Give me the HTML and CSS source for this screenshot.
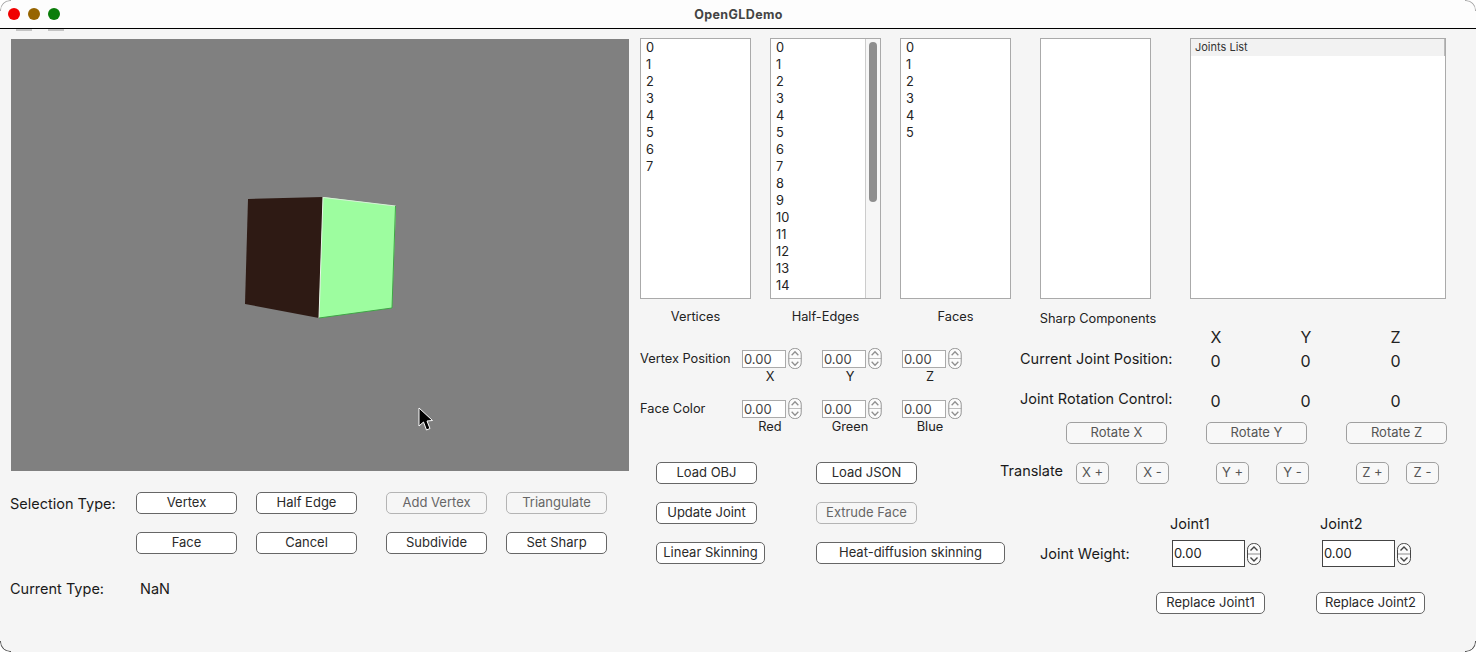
FILE: index.html
```html
<!DOCTYPE html>
<html lang="en">
<head>
<meta charset="utf-8">
<title>OpenGLDemo</title>
<link rel="stylesheet" href="styles.css">
</head>
<body>
<svg class="defs" width="0" height="0" aria-hidden="true">
  <symbol id="spin" viewBox="0 0 14 22">
    <rect x="0.5" y="0.5" width="13" height="21" rx="6" fill="#fbfbfb" stroke="currentColor"/>
    <path d="M0.5 11H13.5" stroke="currentColor" stroke-width="0.6" fill="none"/>
    <path d="M3.500 7.500L7 4L10.500 7.500M3.500 14.500L7 18L10.500 14.500" stroke="currentColor" stroke-width="1.4" fill="none"/>
  </symbol>
</svg>
<div class="window">
  <span class="corner tl"></span><span class="corner tr"></span><span class="corner bl"></span><span class="corner br"></span>
  <header class="titlebar">
    <div class="lights"><i class="light red"></i><i class="light amber"></i><i class="light green"></i></div>
    <div class="title">OpenGLDemo</div>
  </header>
  <div class="marks"><i></i><i></i></div>
  <main class="main">
    <section class="left">
      <svg class="viewport" width="618" height="432" viewBox="0 0 618 432">
        <rect width="618" height="432" fill="#808080"/>
        <g transform="translate(-11 -39)">
          <polygon points="248,199 323,197 319,318 245,304" fill="#2e1a14"/>
          <polygon points="323,197 396,206 392,308 319,318" fill="#9dfd9f"/>
          <path d="M323.500 197.500L395.500 206" stroke="#d8f0d8" stroke-width="1" fill="none"/>
          <path d="M323 197L319 318" stroke="#e8f5e8" stroke-width="1" fill="none"/>
          <path d="M395.500 206L392 308L319 318" stroke="#3fa646" stroke-width="1" fill="none"/>
          <path d="M419 408V426L423.500 422L426.500 430L430 428.500L427 421L432.500 420.500Z" fill="#000" stroke="#fff" stroke-width="1"/>
        </g>
      </svg>
      <div class="selection">
        <span class="label sel-label">Selection Type:</span>
        <button class="btn">Vertex</button>
        <button class="btn">Half Edge</button>
        <button class="btn off">Add Vertex</button>
        <button class="btn off">Triangulate</button>
        <span></span>
        <button class="btn">Face</button>
        <button class="btn">Cancel</button>
        <button class="btn">Subdivide</button>
        <button class="btn">Set Sharp</button>
      </div>
      <div class="current"><span class="label">Current Type:</span><span class="label">NaN</span></div>
    </section>
    <section class="right">
      <div class="lists">
        <div class="listcol">
          <ul class="list"><li>0</li><li>1</li><li>2</li><li>3</li><li>4</li><li>5</li><li>6</li><li>7</li></ul>
          <span class="cap">Vertices</span>
        </div>
        <div class="listcol">
          <div class="list scrolled">
            <ul class="items"><li>0</li><li>1</li><li>2</li><li>3</li><li>4</li><li>5</li><li>6</li><li>7</li><li>8</li><li>9</li><li>10</li><li>11</li><li>12</li><li>13</li><li>14</li></ul>
            <div class="track"><i class="thumb"></i></div>
          </div>
          <span class="cap">Half-Edges</span>
        </div>
        <div class="listcol">
          <ul class="list"><li>0</li><li>1</li><li>2</li><li>3</li><li>4</li><li>5</li></ul>
          <span class="cap">Faces</span>
        </div>
        <div class="listcol sharp">
          <ul class="list"></ul>
          <span class="cap">Sharp Components</span>
        </div>
        <div class="listcol joints-col">
          <div class="list"><div class="tree-head">Joints List</div></div>
        </div>
      </div>
      <div class="mid">
        <div class="fields">
          <div class="fieldrow">
            <span class="cap-left">Vertex Position</span>
            <div class="spinbox"><span class="value">0.00</span><svg class="spin" width="14" height="21"><use href="#spin"/></svg></div>
            <div class="spinbox"><span class="value">0.00</span><svg class="spin" width="14" height="21"><use href="#spin"/></svg></div>
            <div class="spinbox"><span class="value">0.00</span><svg class="spin" width="14" height="21"><use href="#spin"/></svg></div>
            <span></span><span class="axis">X</span><span class="axis">Y</span><span class="axis">Z</span>
          </div>
          <div class="fieldrow">
            <span class="cap-left">Face Color</span>
            <div class="spinbox"><span class="value">0.00</span><svg class="spin" width="14" height="21"><use href="#spin"/></svg></div>
            <div class="spinbox"><span class="value">0.00</span><svg class="spin" width="14" height="21"><use href="#spin"/></svg></div>
            <div class="spinbox"><span class="value">0.00</span><svg class="spin" width="14" height="21"><use href="#spin"/></svg></div>
            <span></span><span class="axis">Red</span><span class="axis">Green</span><span class="axis">Blue</span>
          </div>
        </div>
        <div class="joint-table">
          <div class="table">
            <span></span><span class="num">X</span><span class="num">Y</span><span class="num">Z</span>
            <span class="label raised">Current Joint Position:</span><span class="num">0</span><span class="num">0</span><span class="num">0</span>
            <span class="label raised">Joint Rotation Control:</span><span class="num">0</span><span class="num">0</span><span class="num">0</span>
          </div>
          <div class="rotates">
            <button class="btn soft">Rotate X</button>
            <button class="btn soft">Rotate Y</button>
            <button class="btn soft">Rotate Z</button>
          </div>
        </div>
      </div>
      <div class="bottom">
        <div class="actions">
          <button class="btn">Load OBJ</button>
          <button class="btn">Load JSON</button>
          <button class="btn">Update Joint</button>
          <button class="btn off">Extrude Face</button>
          <button class="btn wide-a">Linear Skinning</button>
          <button class="btn wide-b">Heat-diffusion skinning</button>
        </div>
        <div class="joint-ctl">
          <div class="translate">
            <span class="label translate-label">Translate</span>
            <div class="tgroup"><button class="btn soft tiny">X +</button><button class="btn soft tiny">X -</button></div>
            <div class="tgroup"><button class="btn soft tiny">Y +</button><button class="btn soft tiny">Y -</button></div>
            <div class="tgroup close"><button class="btn soft tiny">Z +</button><button class="btn soft tiny">Z -</button></div>
          </div>
          <div class="weights">
            <span></span><span class="label">Joint1</span><span class="label">Joint2</span>
            <span class="label weight-label">Joint Weight:</span>
            <div class="spinbox big"><span class="value">0.00</span><svg class="spin" width="14" height="22"><use href="#spin"/></svg></div>
            <div class="spinbox big"><span class="value">0.00</span><svg class="spin" width="14" height="22"><use href="#spin"/></svg></div>
          </div>
          <div class="replaces">
            <button class="btn replace">Replace Joint1</button>
            <button class="btn replace">Replace Joint2</button>
          </div>
        </div>
      </div>
    </section>
  </main>
</div>
</body>
</html>
```
FILE: styles.css
```css
* { box-sizing: border-box; }
html, body { margin: 0; padding: 0; background: #fff; }
body { width: 1476px; height: 652px; overflow: hidden; font-family: Inter, "Liberation Sans", sans-serif; color: #1a1a1a; }
.defs { display: block; height: 0; }
.window { position: relative; width: 1476px; height: 652px; background: #f5f5f5; border-radius: 10px; overflow: hidden; }
.corner { position: absolute; width: 11px; height: 11px; border: 0 solid #777; z-index: 2; }
.corner.tl { top: 0; left: 0; border-top-width: 1px; border-left-width: 1px; border-top-left-radius: 10px; border-color: #aaa; }
.corner.tr { top: 0; right: 0; border-top-width: 1px; border-right-width: 1px; border-top-right-radius: 10px; border-color: #aaa; }
.corner.bl { bottom: 0; left: 0; border-bottom-width: 1px; border-left-width: 1px; border-bottom-left-radius: 10px; border-color: #555; }
.corner.br { bottom: 0; right: 0; border-bottom-width: 1px; border-right-width: 1px; border-bottom-right-radius: 10px; border-color: #555; }

.titlebar { display: grid; grid-template-columns: 1fr auto 1fr; align-items: center; height: 29px; background: #fdfdfd; border-bottom: 1px solid #000; }
.lights { display: flex; gap: 8px; padding-left: 8px; }
.light { width: 12px; height: 12px; border-radius: 50%; }
.red { background: #f00000; }
.amber { background: #966400; }
.green { background: #0a7d0a; }
.title { margin-left: 1px; font-size: 12.5px; font-weight: 700; color: #444; letter-spacing: 0.4px; }
.marks { display: flex; gap: 16px; height: 2px; padding-left: 16px; }
.marks i { width: 16px; height: 2px; background: #c4c4c4; }

.main { display: flex; gap: 11px; padding: 7px 0 0 10px; }
.left { width: 619px; padding-top: 1px; flex: none; }
.viewport { display: block; margin-left: 1px; width: 618px; height: 432px; }
.label { font-size: 14.5px; line-height: 18px; color: #1a1a1a; white-space: nowrap; }
.sel-label { padding-top: 2px; }

.btn { height: 22px; padding: 0 0 2px; border: 1px solid #666; border-radius: 5px; background: #fff; font: 13px/18px Inter, "Liberation Sans", sans-serif; color: #2a2a2a; white-space: nowrap; width: 101px; }
.btn.off { border-color: #b4b4b4; background: #f6f6f6; color: #666; }
.btn.soft { border-color: #a0a0a0; background: #f8f8f8; color: #555; }
.btn.tiny { width: 33px; }
.btn.wide-a, .btn.replace { width: 109px; }
.btn.wide-b { width: 189px; }

.selection { display: grid; grid-template-columns: 126px 120px 130px 120px 101px; grid-auto-rows: 22px; row-gap: 18px; margin-top: 21px; align-items: center; }
.current { display: grid; grid-template-columns: 130px auto; margin-top: 26px; }

.right { flex: none; width: 836px; }
.lists { display: flex; height: 290px; gap: 19px; }
.listcol { display: flex; flex-direction: column; align-items: center; width: 111px; }
.sharp { margin-left: 10px; }
.joints-col { width: 256px; margin-left: 20px; }
.list { flex: none; width: 100%; height: 261px; margin: 0; padding: 0; list-style: none; background: #fff; border: 1px solid #aaa; overflow: hidden; }
.list li, .items li { height: 17px; padding-left: 5px; font-size: 12.8px; line-height: 17px; color: #222; }
.list.scrolled { display: flex; }
.items { flex: 1; margin: 0; padding: 0; list-style: none; }
.track { width: 15px; padding: 3px 0 0 3px; background: #f6f6f6; border-left: 1px solid #ccc; }
.thumb { display: block; width: 8px; height: 160px; border-radius: 4px; background: #8e8e8e; }
.cap { flex: none; margin-top: 9px; font-size: 12.8px; line-height: 17px; color: #222; white-space: nowrap; }
.sharp .cap { margin-top: 11px; margin-left: 5px; }
.tree-head { height: 17px; padding-left: 4px; background: #f2f2f2; border-right: 1px solid #bbb; font-size: 11px; line-height: 17px; color: #333; }

.mid { display: flex; }
.fields { display: flex; flex-direction: column; gap: 14px; flex: none; width: 380px; padding-top: 20px; }
.fieldrow { display: grid; grid-template-columns: 102px 80px 80px 80px; grid-template-rows: 21px 15px; align-items: center; }
.cap-left { font-size: 12.8px; line-height: 16px; color: #222; white-space: nowrap; }
.axis { width: 56px; font-size: 12.8px; line-height: 15px; text-align: center; color: #222; }
.spinbox { display: flex; align-items: center; gap: 2px; }
.value { display: block; width: 44px; height: 18px; padding-left: 1px; background: #fff; border: 1px solid #aaa; font-size: 13px; line-height: 17px; color: #444; }
.spin { display: block; flex: none; color: #8f8f8f; }
.spinbox.big .value { width: 73px; height: 27px; margin-left: 2px; border-color: #444; line-height: 25px; color: #222; }
.spinbox.big .spin { color: #444; }

.joint-table { flex: none; width: 456px; margin-bottom: 18px; }
.table { display: grid; grid-template-columns: 190.5px 90px 90px 90px; grid-template-rows: 18px 24px 40px; align-items: end; }
.num { font-size: 16px; line-height: 18px; color: #222; }
.raised { padding-bottom: 2px; }
.rotates { display: flex; gap: 39px; margin: 12px 0 0 46px; }

.bottom { display: flex; }
.actions { display: grid; flex: none; width: 360px; padding-left: 16px; grid-template-columns: 160px 184px; grid-auto-rows: 22px; row-gap: 18px; align-content: start; }
.joint-ctl { flex: none; width: 476px; }
.translate { display: flex; }
.translate-label { width: 76px; flex: none; height: 18px; }
.tgroup { display: flex; gap: 27px; margin-right: 47px; }
.tgroup.close { gap: 17px; margin-right: 0; }
.weights { display: grid; grid-template-columns: 170px 150px 150px; grid-template-rows: 18px 34px; margin-top: 31px; align-items: end; }
.weight-label { margin-left: 40px; align-self: center; margin-top: 7px; }
.replaces { display: flex; gap: 51px; margin: 25px 0 0 156px; }
```
